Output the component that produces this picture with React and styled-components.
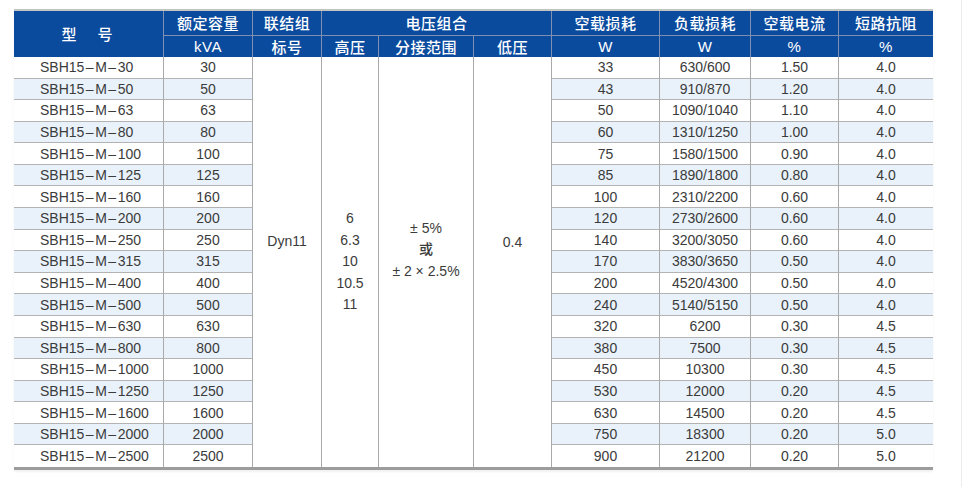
import React from 'react';
import styled, { createGlobalStyle } from 'styled-components';

const GlobalStyle = createGlobalStyle`
  html, body {
    margin: 0;
    padding: 0;
    background: #ffffff;
  }
  body {
    font-family: "Liberation Sans", "Noto Sans CJK SC", Arial, sans-serif;
  }
`;

const Page = styled.div`
  width: 962px;
  height: 487px;
  box-sizing: border-box;
  border-right: 1px solid #ececec;
  padding: 9px 0 0 14px;
`;

const Table = styled.div`
  width: 919px;
  display: grid;
  grid-template-columns: 150px 89px 69px 57px 95px 78px 108px 91px 88px 94px;
  grid-template-rows: 25px 21px repeat(19, 1fr);
  height: 456px;
  border-top: 2px solid #c4c4c4;
  border-bottom: 3px solid #9c9c9c;
  box-shadow: 0 2px 2px rgba(0, 0, 0, 0.06);
`;

const Head = styled.div`
  grid-column: ${p => p.$col};
  grid-row: ${p => p.$row};
  background: #0b4b9e;
  color: #ffffff;
  font-size: 15px;
  font-weight: ${p => (p.$latin ? 400 : 500)};
  letter-spacing: ${p => p.$spread || '0.5px'};
  display: flex;
  align-items: center;
  justify-content: center;
  padding-bottom: 1px;
  box-sizing: border-box;
  border-right: ${p => (p.$last ? 'none' : '1px solid #7f90b2')};
  border-bottom: ${p => (p.$top ? '1px solid #7f90b2' : 'none')};
  white-space: pre;
`;

const Cell = styled.div`
  grid-column: ${p => p.$col};
  grid-row: ${p => p.$row};
  background: ${p => (p.$shade ? '#e9f2fa' : '#ffffff')};
  color: #3b3b3b;
  font-size: 14px;
  display: flex;
  align-items: center;
  justify-content: ${p => (p.$left ? 'flex-start' : 'center')};
  padding-left: ${p => (p.$left ? '26px' : '0')};
  box-sizing: border-box;
  border-right: ${p => (p.$last ? 'none' : '1px solid #a9a9a9')};
  border-bottom: ${p => (p.$end ? 'none' : '1px solid #b3b3b3')};
`;

const Dash = styled.span`
  margin: 0 1.5px;
`;

const Merged = styled.div`
  grid-column: ${p => p.$col};
  grid-row: 3 / 22;
  background: #ffffff;
  color: #3b3b3b;
  font-size: 14px;
  display: flex;
  flex-direction: column;
  align-items: center;
  justify-content: center;
  padding-bottom: ${p => p.$lift || 0}px;
  box-sizing: border-box;
  border-right: 1px solid #a9a9a9;
`;

const Line = styled.div`
  height: 21.5px;
  line-height: 21.5px;
  font-weight: ${p => (p.$cjk ? 500 : 400)};
  white-space: pre;
`;

const rows = [
  ['30', '33', '630/600', '1.50', '4.0'],
  ['50', '43', '910/870', '1.20', '4.0'],
  ['63', '50', '1090/1040', '1.10', '4.0'],
  ['80', '60', '1310/1250', '1.00', '4.0'],
  ['100', '75', '1580/1500', '0.90', '4.0'],
  ['125', '85', '1890/1800', '0.80', '4.0'],
  ['160', '100', '2310/2200', '0.60', '4.0'],
  ['200', '120', '2730/2600', '0.60', '4.0'],
  ['250', '140', '3200/3050', '0.60', '4.0'],
  ['315', '170', '3830/3650', '0.50', '4.0'],
  ['400', '200', '4520/4300', '0.50', '4.0'],
  ['500', '240', '5140/5150', '0.50', '4.0'],
  ['630', '320', '6200', '0.30', '4.5'],
  ['800', '380', '7500', '0.30', '4.5'],
  ['1000', '450', '10300', '0.30', '4.5'],
  ['1250', '530', '12000', '0.20', '4.5'],
  ['1600', '630', '14500', '0.20', '4.5'],
  ['2000', '750', '18300', '0.20', '5.0'],
  ['2500', '900', '21200', '0.20', '5.0'],
];

export default function App() {
  return (
    <Page>
      <GlobalStyle />
      <Table>
        <Head $col="1" $row="1 / 3" $spread="3px">型　号</Head>
        <Head $col="2" $row="1" $top>额定容量</Head>
        <Head $col="2" $row="2" $latin>kVA</Head>
        <Head $col="3" $row="1" $top>联结组</Head>
        <Head $col="3" $row="2">标号</Head>
        <Head $col="4 / 7" $row="1" $top>电压组合</Head>
        <Head $col="4" $row="2">高压</Head>
        <Head $col="5" $row="2">分接范围</Head>
        <Head $col="6" $row="2">低压</Head>
        <Head $col="7" $row="1" $top>空载损耗</Head>
        <Head $col="7" $row="2" $latin>W</Head>
        <Head $col="8" $row="1" $top>负载损耗</Head>
        <Head $col="8" $row="2" $latin>W</Head>
        <Head $col="9" $row="1" $top>空载电流</Head>
        <Head $col="9" $row="2" $latin>%</Head>
        <Head $col="10" $row="1" $top $last>短路抗阻</Head>
        <Head $col="10" $row="2" $latin $last>%</Head>

        {rows.map((r, i) => {
          const row = i + 3;
          const shade = i % 2 === 1;
          const end = i === rows.length - 1;
          return (
            <React.Fragment key={r[0]}>
              <Cell $col="1" $row={row} $shade={shade} $end={end} $left>
                SBH15<Dash>–</Dash>M<Dash>–</Dash>{r[0]}
              </Cell>
              <Cell $col="2" $row={row} $shade={shade} $end={end}>{r[0]}</Cell>
              <Cell $col="7" $row={row} $shade={shade} $end={end}>{r[1]}</Cell>
              <Cell $col="8" $row={row} $shade={shade} $end={end}>{r[2]}</Cell>
              <Cell $col="9" $row={row} $shade={shade} $end={end}>{r[3]}</Cell>
              <Cell $col="10" $row={row} $shade={shade} $end={end} $last>{r[4]}</Cell>
            </React.Fragment>
          );
        })}

        <Merged $col="3" $lift={40}>
          <Line>Dyn11</Line>
        </Merged>
        <Merged $col="4">
          <Line>6</Line>
          <Line>6.3</Line>
          <Line>10</Line>
          <Line>10.5</Line>
          <Line>11</Line>
        </Merged>
        <Merged $col="5" $lift={24}>
          <Line>± 5%</Line>
          <Line $cjk>或</Line>
          <Line>± 2 × 2.5%</Line>
        </Merged>
        <Merged $col="6" $lift={38}>
          <Line>0.4</Line>
        </Merged>
      </Table>
    </Page>
  );
}
